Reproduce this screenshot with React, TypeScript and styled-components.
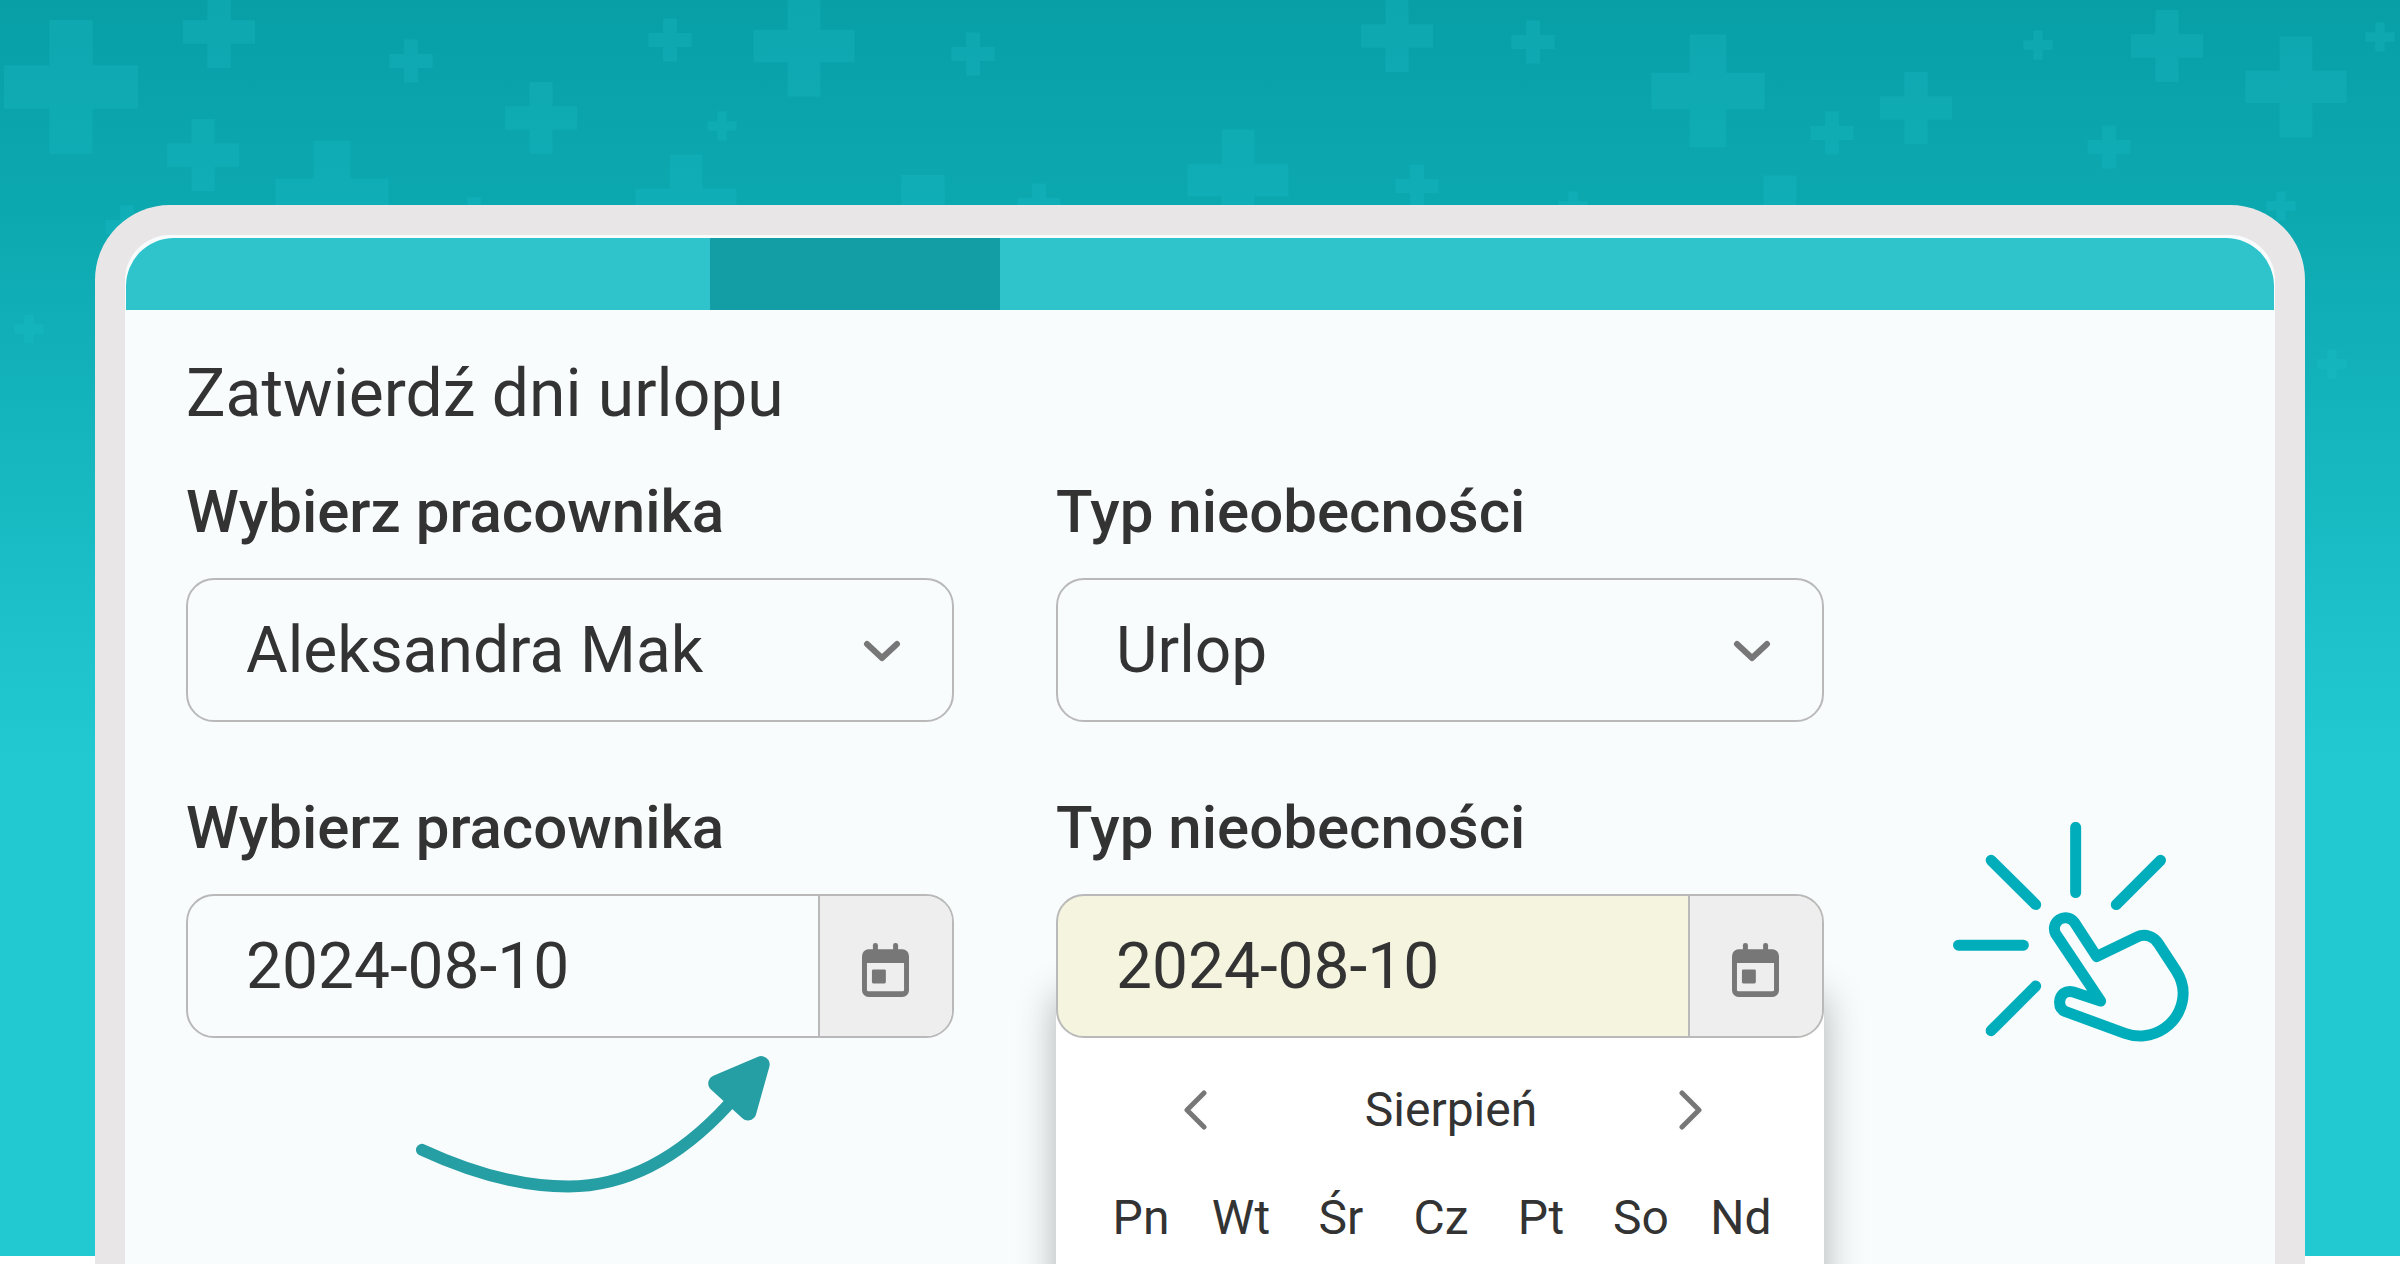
import React, { useId } from 'react';
import styled, { createGlobalStyle } from 'styled-components';

const GlobalStyle = createGlobalStyle`
  *, *::before, *::after {
    box-sizing: border-box;
  }
  body {
    margin: 0;
    background: #ffffff;
    color: #333333;
    font-family: Roboto, "Noto Sans", sans-serif;
  }
`;

const Page = styled.div`
  position: relative;
  display: flex;
  flex-direction: column;
  min-height: 100vh;
  padding: 205px 95px 0;
  overflow: hidden;
`;

const Backdrop = styled.div`
  position: absolute;
  inset: 0 0 8px;
  overflow: hidden;
  background: linear-gradient(180deg, #089fa7 0, #0ca8b0 205px, #22c9d1 760px);
`;

const PlusField = styled.svg`
  display: block;
  width: 100%;
`;

const Device = styled.div`
  position: relative;
  display: flex;
  flex: 1;
  flex-direction: column;
  border: 30px solid #e8e6e7;
  border-bottom: 0;
  border-radius: 75px 75px 0 0;
  background: #f9fcfd;
`;

const TabBar = styled.nav`
  display: grid;
  grid-template-columns: 584fr 290fr 1274fr;
  height: 72px;
  margin: 3px 1px 0;
  overflow: hidden;
  border-radius: 48px 48px 0 0;
  background: #2fc4cc;
`;

const ActiveTab = styled.div`
  grid-column: 2;
  background: #139ea6;
`;

const Form = styled.form`
  padding: 44px 61px 0;
`;

const Title = styled.h1`
  margin: 0 0 42px;
  font-size: 66px;
  font-weight: 400;
  line-height: 80px;
`;

const Fields = styled.div`
  display: grid;
  grid-template-columns: 8fr 8fr 3fr;
  column-gap: 102px;
  row-gap: 70px;
  align-items: start;
`;

const Field = styled.div`
  grid-column: ${(p: { $column: number }) => p.$column};
  min-width: 0;
`;

const Label = styled.label`
  display: block;
  margin-bottom: 30px;
  font-size: 60px;
  font-weight: 500;
  line-height: 72px;
`;

const ControlWrap = styled.div`
  position: relative;
`;

const ControlBox = styled.div<{ $highlighted?: boolean }>`
  position: relative;
  z-index: 1;
  display: flex;
  align-items: stretch;
  height: 144px;
  overflow: hidden;
  border: 2px solid #b9b9b9;
  border-radius: 28px;
  background: ${(p) => (p.$highlighted ? '#f5f4df' : '#f9fcfd')};
`;

const Select = styled.select`
  flex: 1;
  width: 100%;
  padding: 0 100px 0 58px;
  border: 0;
  outline: 0;
  background: transparent;
  appearance: none;
  color: inherit;
  font: inherit;
  font-size: 64px;
`;

const SelectArrow = styled.svg`
  position: absolute;
  top: 60px;
  right: 51px;
  width: 38px;
  height: 22px;
  pointer-events: none;
`;

const DateInput = styled.input`
  flex: 1;
  min-width: 0;
  padding: 0 0 0 58px;
  border: 0;
  outline: 0;
  background: transparent;
  color: inherit;
  font: inherit;
  font-size: 64px;
`;

const CalendarButton = styled.button`
  display: flex;
  align-items: center;
  justify-content: center;
  width: 134px;
  padding: 8px 0 0;
  border: 0;
  border-left: 2px solid #b9b9b9;
  background: #eeeeee;
`;

const CalendarPopup = styled.div`
  position: absolute;
  top: 90px;
  left: 0;
  right: 0;
  padding: 98px 33px 60px 35px;
  background: #ffffff;
  box-shadow: 0 12px 36px rgba(0, 0, 0, 0.3);
`;

const MonthRow = styled.div`
  display: flex;
  align-items: center;
  justify-content: space-between;
  margin: 0 89px 52px 93px;
`;

const MonthName = styled.div`
  padding-left: 16px;
  font-size: 48px;
  line-height: 56px;
`;

const MonthButton = styled.button`
  display: flex;
  padding: 0;
  border: 0;
  background: transparent;
`;

const Weekdays = styled.div`
  display: grid;
  grid-template-columns: repeat(7, 1fr);
  font-size: 48px;
  line-height: 56px;
  text-align: center;
`;

const CurvedArrow = styled.svg`
  display: block;
  width: 354px;
  height: 137px;
  margin: 18px 0 0 230px;
`;

const PointerIcon = styled.svg`
  grid-column: 3;
  justify-self: center;
  width: 238px;
  height: 220px;
  margin-top: 30px;
`;

type Plus = [x: number, y: number, size: number];

const pluses: Plus[] = [
  [71, 87, 134], [219, 32, 72], [411, 61, 43], [203, 155, 72], [332, 197, 113],
  [474, 219, 43], [127, 227, 43], [29, 329, 29], [541, 118, 72], [670, 40, 43],
  [722, 126, 29], [686, 205, 101], [804, 46, 101], [973, 54, 43], [923, 242, 134],
  [1039, 205, 43], [1238, 180, 101], [1397, 36, 72], [1533, 42, 43], [1417, 186, 43],
  [1573, 206, 29], [1708, 91, 113], [1832, 133, 43], [1916, 108, 72], [2038, 45, 29],
  [2167, 46, 72], [2296, 87, 101], [2380, 37, 29], [2109, 147, 43], [1780, 226, 101],
  [2281, 206, 29], [2332, 364, 29],
];

function plusPath([x, y, size]: Plus) {
  const r = size / 2;
  const t = size * 0.162;
  const arm = r - t;
  return `M${x - t} ${y - r}h${2 * t}v${arm}h${arm}v${2 * t}h${-arm}v${arm}h${-2 * t}v${-arm}h${-arm}v${-2 * t}h${arm}z`;
}

function SelectField({ column, label, value }: { column: number; label: string; value: string }) {
  const id = useId();
  return (
    <Field $column={column}>
      <Label htmlFor={id}>{label}</Label>
      <ControlBox>
        <Select id={id} defaultValue={value}>
          <option>{value}</option>
        </Select>
        <SelectArrow viewBox="0 0 38 22" fill="none" aria-hidden="true">
          <path d="M4 4 L19 18 L34 4" stroke="#777777" strokeWidth="6" strokeLinecap="round" strokeLinejoin="round" />
        </SelectArrow>
      </ControlBox>
    </Field>
  );
}

function CalendarIcon() {
  return (
    <svg width="48" height="54" viewBox="216 68 145 163" fill="#777777" aria-hidden="true">
      <path
        fillRule="evenodd"
        d="M236 87h102a20 20 0 0 1 20 20v104a20 20 0 0 1-20 20H236a20 20 0 0 1-20-20V107a20 20 0 0 1 20-20z M231 128v82a4 4 0 0 0 4 4h104a4 4 0 0 0 4-4v-82z"
      />
      <rect x="249" y="68" width="15" height="30" rx="7" />
      <rect x="310" y="68" width="15" height="30" rx="7" />
      <rect x="246" y="148" width="42" height="42" rx="4" />
    </svg>
  );
}

type DateFieldProps = {
  column: number;
  label: string;
  highlighted?: boolean;
  popup?: React.ReactNode;
  children?: React.ReactNode;
};

function DateField({ column, label, highlighted, popup, children }: DateFieldProps) {
  const id = useId();
  return (
    <Field $column={column}>
      <Label htmlFor={id}>{label}</Label>
      <ControlWrap>
        {popup}
        <ControlBox $highlighted={highlighted}>
          <DateInput id={id} type="text" defaultValue="2024-08-10" />
          <CalendarButton type="button" aria-label="Kalendarz">
            <CalendarIcon />
          </CalendarButton>
        </ControlBox>
      </ControlWrap>
      {children}
    </Field>
  );
}

function MonthCalendar() {
  return (
    <CalendarPopup>
      <MonthRow>
        <MonthButton type="button" aria-label="Poprzedni miesiąc">
          <svg width="23" height="40" viewBox="0 0 23 40" fill="none">
            <path d="M20 3 L3 20 L20 37" stroke="#777777" strokeWidth="5" strokeLinecap="round" strokeLinejoin="round" />
          </svg>
        </MonthButton>
        <MonthName>Sierpień</MonthName>
        <MonthButton type="button" aria-label="Następny miesiąc">
          <svg width="23" height="40" viewBox="0 0 23 40" fill="none">
            <path d="M3 3 L20 20 L3 37" stroke="#777777" strokeWidth="5" strokeLinecap="round" strokeLinejoin="round" />
          </svg>
        </MonthButton>
      </MonthRow>
      <Weekdays>
        {['Pn', 'Wt', 'Śr', 'Cz', 'Pt', 'So', 'Nd'].map((day) => (
          <span key={day}>{day}</span>
        ))}
      </Weekdays>
    </CalendarPopup>
  );
}

export default function App() {
  return (
    <>
      <GlobalStyle />
      <Page>
        <Backdrop>
          <PlusField viewBox="0 0 2400 1264" aria-hidden="true">
            {pluses.map((plus) => (
              <path key={plus.join()} d={plusPath(plus)} fill="#22c9d1" fillOpacity="0.2" />
            ))}
          </PlusField>
        </Backdrop>
        <Device>
          <TabBar>
            <ActiveTab />
          </TabBar>
          <Form>
            <Title>Zatwierdź dni urlopu</Title>
            <Fields>
              <SelectField column={1} label="Wybierz pracownika" value="Aleksandra Mak" />
              <SelectField column={2} label="Typ nieobecności" value="Urlop" />
              <DateField column={1} label="Wybierz pracownika">
                <CurvedArrow viewBox="49 79 1061 410" fill="none" aria-hidden="true">
                  <path
                    d="M67 360 C240 440 390 470 505 470 C660 470 820 405 985 225"
                    stroke="#259ea4"
                    strokeWidth="36"
                    strokeLinecap="round"
                  />
                  <path
                    d="M1084 104 L950 161 L1044 247 Z"
                    fill="#259ea4"
                    stroke="#259ea4"
                    strokeWidth="50"
                    strokeLinejoin="round"
                  />
                </CurvedArrow>
              </DateField>
              <DateField column={2} label="Typ nieobecności" highlighted popup={<MonthCalendar />} />
              <PointerIcon
                viewBox="93 123 714 661"
                fill="none"
                stroke="#00aebb"
                strokeWidth="33"
                strokeLinecap="round"
                strokeLinejoin="round"
                aria-hidden="true"
              >
                <path d="M467 139V335 M213 238L347 371 M722 238L589 371 M115 493H310 M213 750L347 616" />
                <path d="M530 527L462 423A33 33 0 0 0 407 459L542 661L460 634C438 627 420 641 419 663C418 677 425 688 437 693L615 758A130 130 0 0 0 790 637C790 612 783 592 769 570L716 489C702 466 676 457 650 469Z" />
              </PointerIcon>
            </Fields>
          </Form>
        </Device>
      </Page>
    </>
  );
}
